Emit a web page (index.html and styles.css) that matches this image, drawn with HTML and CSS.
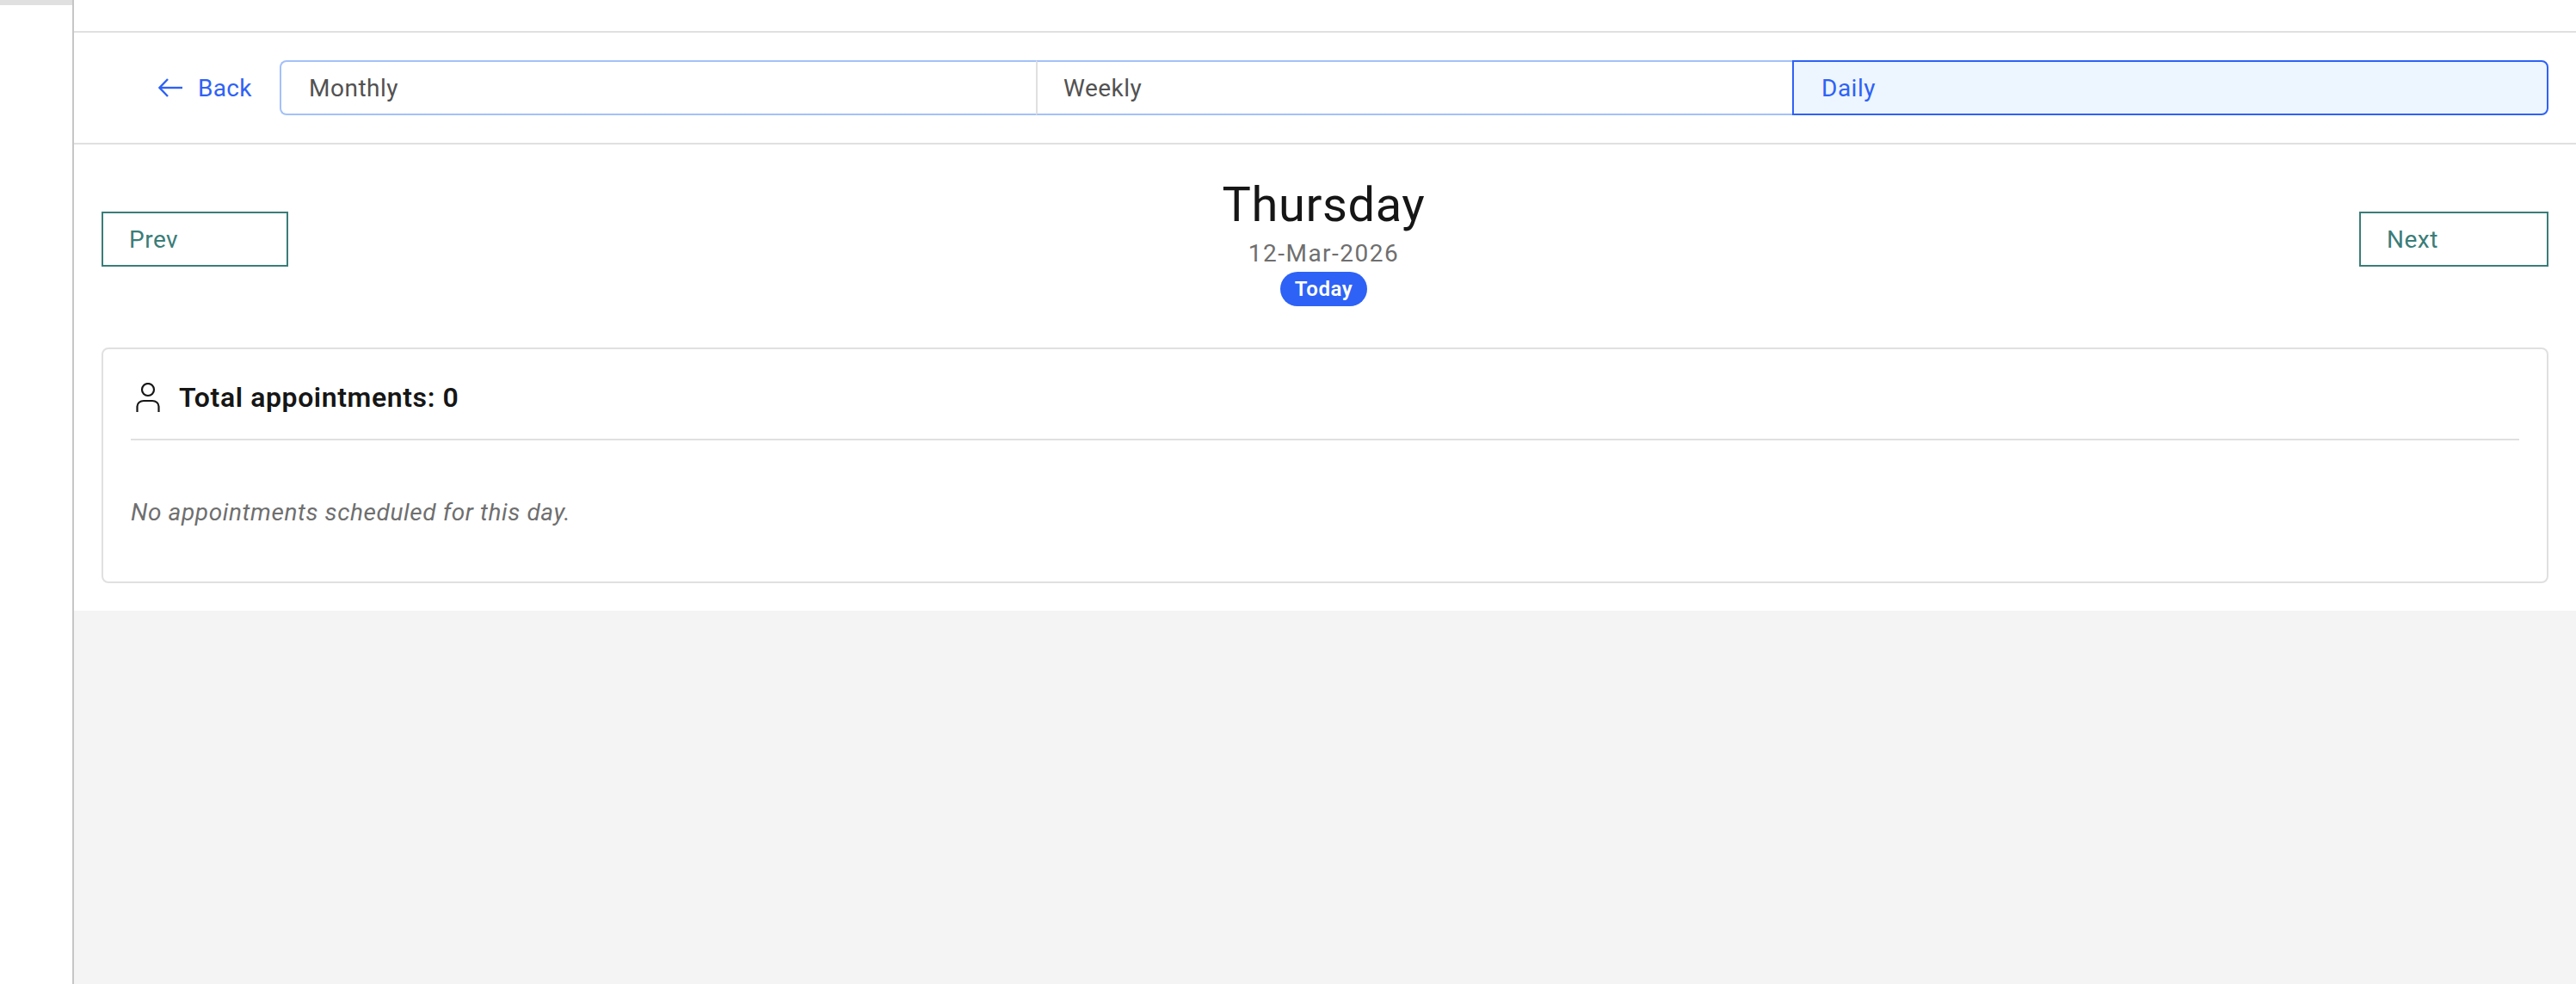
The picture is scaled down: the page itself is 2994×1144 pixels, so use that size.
FILE: index.html
```html
<!DOCTYPE html>
<html lang="en">
<head>
    <meta charset="UTF-8">
    <meta name="viewport" content="width=device-width, initial-scale=1.0">
    <title>Appointments</title>
    <link rel="stylesheet" href="styles.css">
</head>
<body>
    <div class="sidebar">
        <div class="sidebar-top"></div>
    </div>

    <div class="main">
        <div class="panel">
            <div class="top-strip"></div>

            <div class="toolbar">
                <a href="#" class="back-link">
                    <svg class="back-icon" viewBox="0 0 28 24" fill="none" stroke="currentColor" stroke-width="2.4">
                        <path d="M11 2 L1.5 12 L11 22"/>
                        <path d="M1.5 12 H28"/>
                    </svg>
                    Back
                </a>
                <div class="tabs">
                    <div class="tab tab-first">Monthly</div>
                    <div class="tab">Weekly</div>
                    <div class="tab tab-active">Daily</div>
                </div>
            </div>

            <div class="day-header">
                <button class="nav-button nav-prev">Prev</button>
                <div class="day-title">
                    <h1>Thursday</h1>
                    <p>12-Mar-2026</p>
                    <span class="today-tag">Today</span>
                </div>
                <button class="nav-button nav-next">Next</button>
            </div>

            <div class="card">
                <div class="card-head">
                    <svg class="person-icon" viewBox="0 0 28 34" fill="none" stroke="#161616" stroke-width="2.2">
                        <circle cx="14" cy="8" r="7"/>
                        <path d="M1.5 34 V27.5 C1.5 23.5 5 21 9 21 H19 C23 21 26.5 23.5 26.5 27.5 V34"/>
                    </svg>
                    <h3>Total appointments: 0</h3>
                </div>
                <p class="empty-note">No appointments scheduled for this day.</p>
            </div>
        </div>
    </div>
</body>
</html>
```

FILE: styles.css
```css
/* General Reset */
* {
    margin: 0;
    padding: 0;
    box-sizing: border-box;
}

body {
    display: flex;
    min-height: 1144px;
    font-family: Roboto, "Liberation Sans", sans-serif;
    letter-spacing: 0.3px;
    background: #f4f4f4;
    color: #161616;
}

.sidebar {
    width: 86px;
    flex-shrink: 0;
    background: white;
    border-right: 2px solid #c6c6c6;
}

.sidebar-top {
    height: 6px;
    background: #e0e0e0;
}

.main {
    flex: 1;
}

.panel {
    background: white;
    height: 710px;
}

.top-strip {
    height: 38px;
    border-bottom: 2px solid #e0e0e0;
}

/* Back link and view switcher */
.toolbar {
    display: flex;
    align-items: center;
    height: 130px;
    padding: 0 32px 0 98px;
    border-bottom: 2px solid #e0e0e0;
}

.back-link {
    display: flex;
    align-items: center;
    gap: 18px;
    width: 141px;
    color: #2e62f6;
    font-size: 28px;
    text-decoration: none;
}

.back-icon {
    width: 28px;
    height: 24px;
}

.tabs {
    flex: 1;
    display: grid;
    grid-template-columns: repeat(3, 1fr);
    height: 64px;
}

.tab {
    display: flex;
    align-items: center;
    padding-left: 30px;
    font-size: 28px;
    letter-spacing: 0.5px;
    color: #525252;
    border-top: 2px solid #a3c1f9;
    border-bottom: 2px solid #a3c1f9;
    border-left: 2px solid #e0e0e0;
}

.tab-first {
    padding-left: 32px;
    border-left: 2px solid #a3c1f9;
    border-radius: 8px 0 0 8px;
}

.tab-active {
    padding-left: 32px;
    color: #2e62f6;
    background: #edf5ff;
    border: 2px solid #2e62f6;
    border-radius: 0 8px 8px 0;
}

/* Day heading */
.day-header {
    display: flex;
    justify-content: space-between;
    align-items: flex-start;
    height: 236px;
    padding: 78px 32px 0;
}

.nav-button {
    height: 64px;
    padding-left: 30px;
    text-align: left;
    font-family: inherit;
    letter-spacing: 0.5px;
    font-size: 28px;
    color: #3a7d78;
    background: white;
    border: 2px solid #3a7d78;
}

.nav-prev {
    width: 217px;
}

.nav-next {
    width: 220px;
}

.day-title {
    margin-top: -44px;
    display: flex;
    flex-direction: column;
    align-items: center;
}

.day-title h1 {
    font-size: 56px;
    font-weight: 400;
    letter-spacing: 0.6px;
    line-height: 72px;
}

.day-title p {
    margin-top: 3px;
    font-size: 28px;
    letter-spacing: 1.5px;
    line-height: 36px;
    color: #6f6f6f;
}

.today-tag {
    margin-top: 3px;
    padding: 1px 17px 0;
    font-size: 24px;
    font-weight: 600;
    line-height: 39px;
    letter-spacing: 0.6px;
    color: white;
    background: #2e62f6;
    border-radius: 20px;
}

/* Appointment card */
.card {
    height: 274px;
    margin: 0 32px;
    padding: 0 32px;
    border: 2px solid #e0e0e0;
    border-radius: 8px;
}

.card-head {
    display: flex;
    align-items: center;
    gap: 22px;
    height: 106px;
    padding: 8px 0 0 6px;
    border-bottom: 2px solid #e0e0e0;
}

.person-icon {
    width: 28px;
    height: 34px;
}

.card-head h3 {
    font-size: 32px;
    font-weight: 600;
    letter-spacing: 0.6px;
}

.empty-note {
    margin-top: 67px;
    font-size: 28px;
    font-style: italic;
    letter-spacing: 0.6px;
    color: #6f6f6f;
}
```
